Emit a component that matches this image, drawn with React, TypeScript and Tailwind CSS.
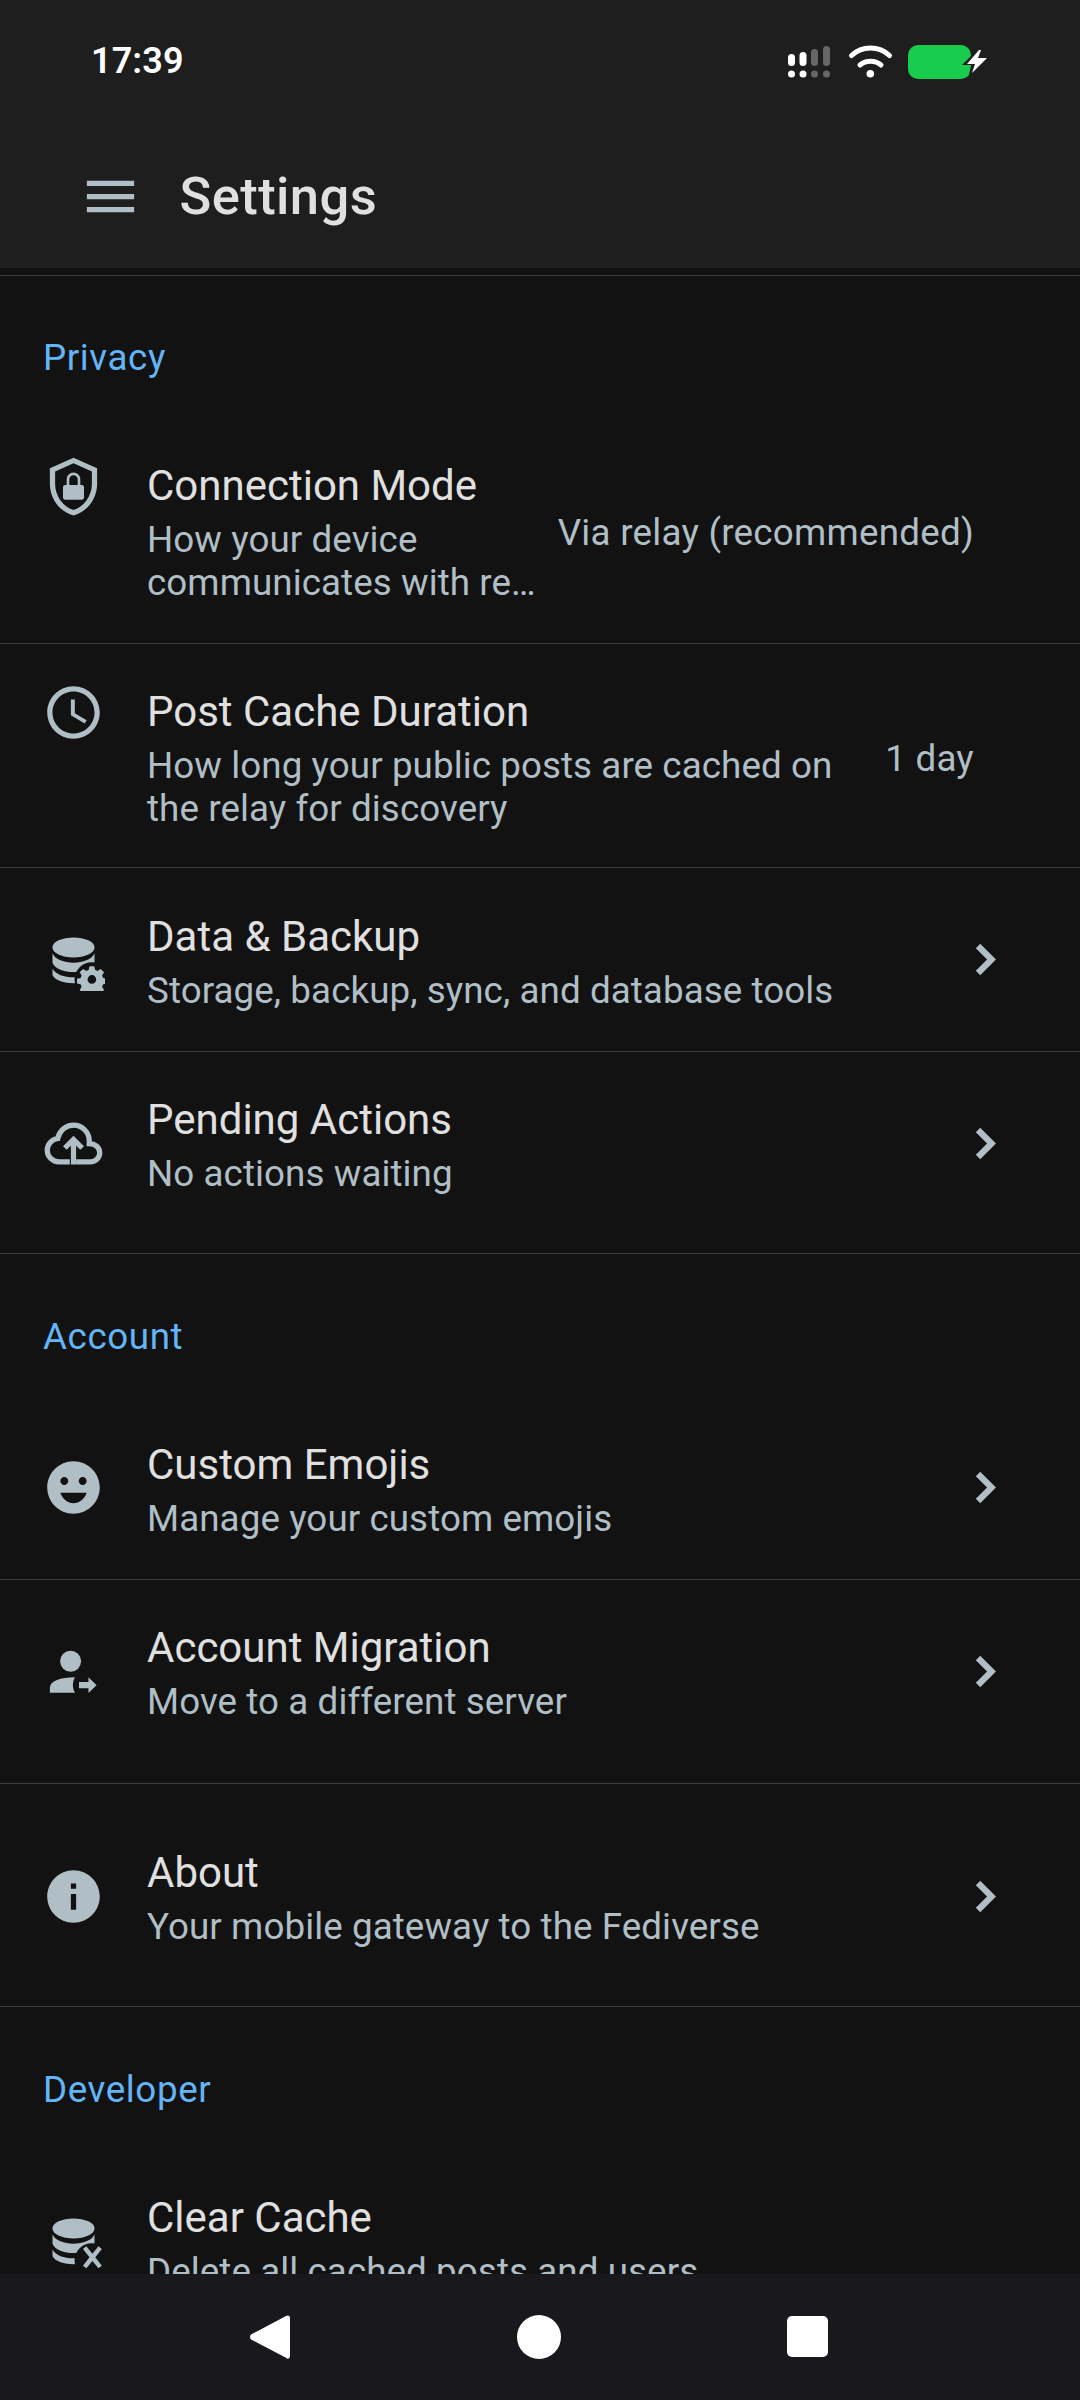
import React from "react";

const C = "#b0bec5";

function Ico({ children, className = "" }: { children: React.ReactNode; className?: string }) {
  return (
    <svg viewBox="0 0 24 24" fill={C} className={"w-[63px] h-[63px] shrink-0 " + className}>
      {children}
    </svg>
  );
}

const Shield = () => (
  <>
    <path d="M12 1 3 5v6c0 5.55 3.84 10.74 9 12 5.16-1.26 9-6.45 9-12V5l-9-4zm7 10c0 4.52-2.98 8.69-7 9.93-4.02-1.24-7-5.41-7-9.93V6.3l7-3.11 7 3.11V11z" />
    <rect x="8" y="11.4" width="8" height="5.6" rx="0.8" />
    <path d="M9.9 12V9.3a2.1 2.1 0 0 1 4.2 0V12" fill="none" stroke={C} strokeWidth="1" />
  </>
);
const Clock = () => (
  <path d="M11.99 2C6.47 2 2 6.48 2 12s4.47 10 9.99 10C17.52 22 22 17.52 22 12S17.52 2 11.99 2zM12 20c-4.42 0-8-3.58-8-8s3.58-8 8-8 8 3.58 8 8-3.58 8-8 8zm.5-13H11v6l5.25 3.15.75-1.23-4.5-2.67z" />
);
const Gear = () => (
  <g transform="translate(19 19.6) scale(0.5)">
    <path
      fillRule="evenodd"
      d="M-1.8-10h3.6l.6 2.7 1.9.8 2.4-1.5 2.6 2.6-1.5 2.4.8 1.9 2.7.6v3.6l-2.7.6-.8 1.9 1.5 2.4-2.6 2.6-2.4-1.5-1.9.8-.6 2.7h-3.6l-.6-2.7-1.9-.8-2.4 1.5-2.6-2.6 1.5-2.4-.8-1.9-2.7-.6v-3.6l2.7-.6.8-1.9-1.5-2.4 2.6-2.6 2.4 1.5 1.9-.8zM0-3.3a3.3 3.3 0 1 0 0 6.6 3.3 3.3 0 0 0 0-6.6z"
    />
  </g>
);
const Db = () => (
  <>
    <ellipse cx="12" cy="7.4" rx="8" ry="3.8" />
    <path d="M4 9.6C5 12 8.5 13.2 12 13.2s7-1.2 8-3.6v3.6c-1 2.4-4.5 3.6-8 3.6s-7-1.2-8-3.6z" />
    <path d="M4 15.4c1 2.2 4.5 3.4 8 3.4s7-1.2 8-3.4V18c-1 2-4.5 3-8 3s-7-1-8-3z" />
    <circle cx="19" cy="19.6" r="6.6" fill="#121212" />
  </>
);
const DbGear = () => (
  <>
    <Db />
    <Gear />
  </>
);
const DbX = () => (
  <>
    <Db />
    <path d="M15.6 15.2l1.3-1 2.3 2.8 2.3-2.8 1.3 1-2.5 3.2 2.5 3.2-1.3 1-2.3-2.8-2.3 2.8-1.3-1 2.5-3.2z" />
  </>
);
const Cloud = () => (
  <>
    <path
      d="M10.6 19H6.5C4 19 2 17 2 14.6c0-2.3 1.7-4.2 4-4.5C6.7 7.1 9.1 5 12 5c3.3 0 6 2.7 6 6v1c2.3 0 4 1.6 4 3.5S20.4 19 18.5 19H13"
      fill="none"
      stroke={C}
      strokeWidth="2"
    />
    <path d="M11 20v-7.15l-1.6 1.55L8 13l4-4 4 4-1.4 1.4-1.6-1.55V20z" />
  </>
);
const Emoji = () => (
  <path d="M11.99 2C6.47 2 2 6.48 2 12s4.47 10 9.99 10C17.52 22 22 17.52 22 12S17.52 2 11.99 2zM8.5 8c.83 0 1.5.67 1.5 1.5S9.33 11 8.5 11 7 10.33 7 9.5 7.67 8 8.5 8zM12 18c-2.28 0-4.22-1.66-5-4h10c-.78 2.34-2.72 4-5 4zm3.5-7c-.83 0-1.5-.67-1.5-1.5S14.67 8 15.5 8s1.5.67 1.5 1.5-.67 1.5-1.5 1.5z" />
);
const Person = () => (
  <>
    <circle cx="10.9" cy="8.1" r="4" />
    <path d="M3 20.1v-1.9c0-2.5 4-4 9.6-4-1.1 1.8-1.1 4.1 0 5.9z" />
    <path d="M14.1 16h3.6v-1.8l3.1 3-3.1 3v-1.8h-3.6z" />
  </>
);
const Info = () => (
  <path d="M12 2C6.48 2 2 6.48 2 12s4.48 10 10 10 10-4.48 10-10S17.52 2 12 2zm1 15h-2v-6h2v6zm0-8h-2V7h2v2z" />
);
const Chevron = ({ className }: { className: string }) => (
  <svg viewBox="0 0 24 24" fill={C} className={"w-[63px] h-[63px] shrink-0 " + className}>
    <path d="M10 6L8.3 7.7 12.6 12l-4.3 4.3L10 18l6-6z" />
  </svg>
);

function Title({ children }: { children: React.ReactNode }) {
  return <div className="text-[42px] leading-[56px] text-[#e0e0e0] whitespace-nowrap">{children}</div>;
}
function Sub({ children }: { children: React.ReactNode }) {
  return <div className="text-[36.75px] leading-[42.5px] tracking-[0.08px] text-[#b0bec5]">{children}</div>;
}
function Section({ children, className }: { children: React.ReactNode; className: string }) {
  return (
    <div className={"h-[142px] pl-[43px] text-[36.75px] leading-[44px] tracking-[0.6px] text-[#64b5f6] " + className}>
      {children}
    </div>
  );
}

function NavRow({
  title,
  sub,
  icon,
  className,
  chevron,
  iconTop,
  textTop,
}: {
  title: string;
  sub: string;
  icon: React.ReactNode;
  className: string;
  chevron: string;
  iconTop: string;
  textTop: string;
}) {
  return (
    <div className={"flex pl-[42px] border-b border-[#3d3d3d] box-border " + className}>
      <Ico className={iconTop}>{icon}</Ico>
      <div className={"ml-[42px] flex-1 min-w-0 " + textTop}>
        <Title>{title}</Title>
        <div className="mt-[5px]">
          <Sub>{sub}</Sub>
        </div>
      </div>
      <Chevron className={"mr-[63px] " + chevron} />
    </div>
  );
}

export default function App() {
  return (
    <div className="w-[1080px] h-[2400px] flex flex-col bg-[#121212] font-[Roboto,sans-serif] overflow-hidden">
      <header className="h-[268px] shrink-0 bg-[#1e1e1e] flex flex-col">
        <div className="h-[120px] flex items-start justify-between pl-[91px] pr-[92px] pt-[40px]">
          <span className="text-[36px] leading-[40px] font-semibold text-white tracking-[0.1px] mt-[1px]">17:39</span>
          <svg width="200" height="44" viewBox="788 40 200 44">
            <rect x="788" y="54" width="7" height="12" rx="3.5" fill="#fff" />
            <rect x="799.5" y="52" width="7" height="14" rx="3.5" fill="#fff" />
            <rect x="811" y="49" width="7" height="17" rx="3.5" fill="#666" />
            <rect x="823" y="46" width="7" height="20" rx="3.5" fill="#666" />
            <circle cx="791.5" cy="74" r="3.5" fill="#fff" />
            <circle cx="803" cy="74" r="3.5" fill="#fff" />
            <circle cx="814.5" cy="74" r="3.5" fill="#666" />
            <circle cx="826.5" cy="74" r="3.5" fill="#666" />
            <path d="M851.5 55.5C862 45.5 879 45.5 889.5 55.5" fill="none" stroke="#fff" strokeWidth="5" strokeLinecap="round" />
            <path d="M860 65C866 60 875 60 881 65" fill="none" stroke="#fff" strokeWidth="5" strokeLinecap="round" />
            <circle cx="870.3" cy="73.7" r="3.8" fill="#fff" />
            <rect x="908" y="45" width="63" height="34" rx="10" fill="#1acc4d" />
            <path d="M981 46 962 65h9l-3 15 20-23h-10l3-11z" fill="#1e1e1e" />
            <path d="M979 50 967 64h8l-3 9 15-15h-9l3-8z" fill="#fff" />
          </svg>
        </div>
        <div className="flex items-center pl-[87px] mt-[34px] h-[84px]">
          <svg viewBox="0 0 24 24" fill={C} className="w-[63px] h-[63px] -ml-[7.9px]">
            <path d="M3 18h18v-2H3v2zm0-5h18v-2H3v2zm0-7v2h18V6H3z" />
          </svg>
          <span className="ml-[37.5px] text-[52.5px] leading-[64px] tracking-[0.4px] font-medium text-[#e0e0e0]">Settings</span>
        </div>
      </header>
      <div className="h-[8px] shrink-0 bg-[#121212] border-b border-[#3d3d3d]" />
      <main className="flex-1 min-h-0 overflow-hidden">
        <Section className="pt-[60px]">Privacy</Section>
        <div className="flex pl-[42px] border-b border-[#3d3d3d] h-[227px] box-border -mt-[1px]">
          <Ico className="mt-[38px]"><Shield /></Ico>
          <div className="ml-[42px] w-[390px] pt-[41px] shrink-0">
            <Title>Connection Mode</Title>
            <div className="mt-[5px]">
              <Sub>How your device</Sub>
              <Sub><div className="truncate">communicates with relay servers</div></Sub>
            </div>
          </div>
          <div className="flex-1 text-right pr-[106px] pt-[94px] text-[36.75px] leading-[44px] tracking-[0.25px] text-[#b0bec5] whitespace-nowrap">Via relay (recommended)</div>
        </div>
        <div className="flex pl-[42px] border-b border-[#3d3d3d] h-[224px] box-border">
          <Ico className="mt-[37px]"><Clock /></Ico>
          <div className="ml-[42px] w-[700px] pt-[40px] shrink-0">
            <Title>Post Cache Duration</Title>
            <div className="mt-[5px]">
              <Sub>How long your public posts are cached on</Sub>
              <Sub>the relay for discovery</Sub>
            </div>
          </div>
          <div className="flex-1 text-right pr-[106px] pt-[93px] text-[36.75px] leading-[44px] tracking-[0.25px] text-[#b0bec5] whitespace-nowrap">1 day</div>
        </div>
        <NavRow title="Data & Backup" sub="Storage, backup, sync, and database tools" icon={<DbGear />} className="h-[184px]" iconTop="mt-[60px]" chevron="mt-[60px]" textTop="pt-[41px]" />
        <NavRow title="Pending Actions" sub="No actions waiting" icon={<Cloud />} className="h-[202px]" iconTop="mt-[60px]" chevron="mt-[60px]" textTop="pt-[40px]" />
        <Section className="pt-[61px]">Account</Section>
        <NavRow title="Custom Emojis" sub="Manage your custom emojis" icon={<Emoji />} className="h-[184px]" iconTop="mt-[60px]" chevron="mt-[60px]" textTop="pt-[41px]" />
        <NavRow title="Account Migration" sub="Move to a different server" icon={<Person />} className="h-[204px]" iconTop="mt-[60px]" chevron="mt-[60px]" textTop="pt-[40px]" />
        <NavRow title="About" sub="Your mobile gateway to the Fediverse" icon={<Info />} className="h-[223px]" iconTop="mt-[81px]" chevron="mt-[81px]" textTop="pt-[61px]" />
        <Section className="pt-[61px]">Developer</Section>
        <div className="flex pl-[42px]">
          <Ico className="mt-[60px]"><DbX /></Ico>
          <div className="ml-[42px] pt-[41px]">
            <Title>Clear Cache</Title>
            <div className="mt-[5px]">
              <Sub>Delete all cached posts and users</Sub>
            </div>
          </div>
        </div>
      </main>
      <nav className="h-[126px] shrink-0 bg-[#19181d] flex items-center justify-center pb-[1px]">
        <div className="w-[1080px] flex items-center justify-between pl-[250px] pr-[252px]">
          <svg width="40" height="44" viewBox="0 0 40 44" fill="#fff">
            <path d="M38 0.5C39 .5 40 1.5 40 3v38c0 2.5-2.5 3.5-4 1.8L1 24.5c-1.3-1.3-1.3-3.7 0-5L36 1c.6-.3 1.2-.5 2-.5z" />
          </svg>
          <div className="w-[44px] h-[44px] rounded-full bg-white" />
          <div className="w-[41px] h-[41px] rounded-[5px] bg-white" />
        </div>
      </nav>
    </div>
  );
}
